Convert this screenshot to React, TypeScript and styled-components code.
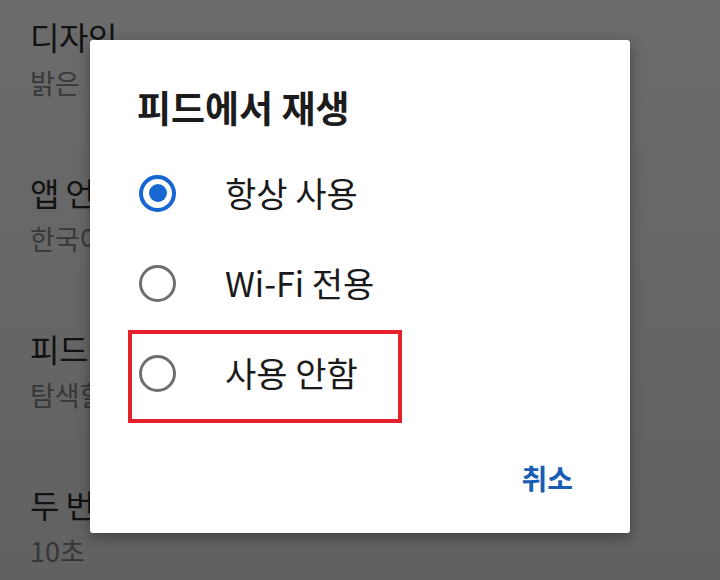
import { FC } from 'react';
import styled, { createGlobalStyle } from 'styled-components';

const GlobalStyle = createGlobalStyle`
  html, body {
    margin: 0;
    padding: 0;
    background: #fff;
  }
  body {
    font-family: "Noto Sans CJK KR", "Noto Sans", sans-serif;
  }
`;

const Styled = {
  Screen: styled.div`
    position: relative;
    width: 720px;
    height: 580px;
    overflow: hidden;
    background: #fff;
  `,
  SettingsList: styled.ul`
    list-style: none;
    margin: 0;
    padding: 0;
    display: flex;
    flex-direction: column;
  `,
  SettingItem: styled.li`
    display: flex;
    flex-direction: column;
    gap: 9px;
    height: 156px;
    box-sizing: border-box;
    padding: 16px 78px 0 30px;
  `,
  SettingTitle: styled.span`
    font-size: 32px;
    line-height: 40px;
    color: #2e2e2e;
    letter-spacing: -0.5px;
  `,
  SettingValue: styled.span`
    font-size: 27px;
    line-height: 36px;
    color: #8c8c8c;
    white-space: pre;
    overflow: hidden;
    text-overflow: ellipsis;
  `,
  Scrim: styled.div`
    position: absolute;
    inset: 0;
    background: linear-gradient(180deg, rgba(0, 0, 0, 0.58) 0%, rgba(0, 0, 0, 0.62) 100%);
  `,
  Dialog: styled.div`
    position: absolute;
    left: 90px;
    top: 40px;
    width: 540px;
    height: 493px;
    background: #fff;
    border-radius: 3px;
    box-shadow: 0 4px 14px rgba(0, 0, 0, 0.35);
    display: flex;
    flex-direction: column;
    box-sizing: border-box;
    padding-top: 45px;
  `,
  DialogTitle: styled.h2`
    margin: 0 0 19px;
    padding-left: 47px;
    font-size: 37px;
    line-height: 44px;
    font-weight: 700;
    letter-spacing: 0;
    color: #1c1c1c;
  `,
  OptionRow: styled.label`
    position: relative;
    display: flex;
    align-items: center;
    gap: 49px;
    height: 90px;
    padding-left: 49px;
  `,
  Radio: styled.span<{ checked: boolean }>`
    display: flex;
    align-items: center;
    justify-content: center;
    width: 37px;
    height: 37px;
    box-sizing: border-box;
    border-radius: 50%;
    border: ${({ checked }) => (checked ? '4px solid #1866d2' : '3.5px solid #6f6f6f')};
    &::after {
      content: '';
      display: ${({ checked }) => (checked ? 'block' : 'none')};
      width: 18px;
      height: 18px;
      border-radius: 50%;
      background: #1866d2;
    }
  `,
  OptionLabel: styled.span`
    font-size: 34px;
    line-height: 44px;
    letter-spacing: 0;
    color: #1a1a1a;
  `,
  Highlight: styled.span`
    position: absolute;
    left: 38px;
    top: 2px;
    width: 274px;
    height: 93px;
    box-sizing: border-box;
    border: 4px solid #e4202a;
    pointer-events: none;
  `,
  Actions: styled.div`
    margin-top: auto;
    display: flex;
    justify-content: flex-end;
    padding: 0 57px 35px 0;
  `,
  TextButton: styled.button`
    border: 0;
    background: none;
    padding: 0;
    cursor: pointer;
    font-family: inherit;
    font-size: 28px;
    line-height: 40px;
    font-weight: 700;
    letter-spacing: 0;
    color: #1a5db5;
  `,
};

const settings = [
  { title: '디자인', value: '밝은   테마, 어두운 테마 또는 시스템 기본 설정을 따르는 테마 사용' },
  { title: '앱 언어', value: '한국어' },
  { title: '피드에서 재생', value: '탐색할 때 동영상 자동 재생' },
  { title: '두 번 탭하여 탐색', value: '10초' },
];

const options = [
  { label: '항상 사용', checked: true, marked: false },
  { label: 'Wi-Fi 전용', checked: false, marked: false },
  { label: '사용 안함', checked: false, marked: true },
];

const App: FC = () => (
  <>
    <GlobalStyle />
    <Styled.Screen>
      <Styled.SettingsList>
        {settings.map((s) => (
          <Styled.SettingItem key={s.title}>
            <Styled.SettingTitle>{s.title}</Styled.SettingTitle>
            <Styled.SettingValue>{s.value}</Styled.SettingValue>
          </Styled.SettingItem>
        ))}
      </Styled.SettingsList>
      <Styled.Scrim />
      <Styled.Dialog role="dialog">
        <Styled.DialogTitle>피드에서 재생</Styled.DialogTitle>
        {options.map((o) => (
          <Styled.OptionRow key={o.label}>
            <Styled.Radio checked={o.checked} />
            <Styled.OptionLabel>{o.label}</Styled.OptionLabel>
            {o.marked && <Styled.Highlight />}
          </Styled.OptionRow>
        ))}
        <Styled.Actions>
          <Styled.TextButton>취소</Styled.TextButton>
        </Styled.Actions>
      </Styled.Dialog>
    </Styled.Screen>
  </>
);

export default App;
